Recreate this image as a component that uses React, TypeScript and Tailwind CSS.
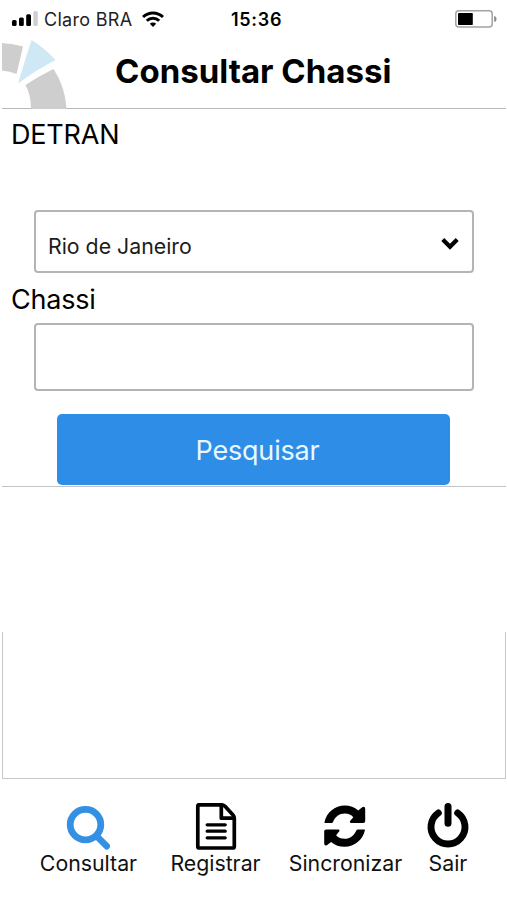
import { useState } from "react";
import type { ReactNode } from "react";

function SignalIcon() {
  return (
    <svg width="27" height="16" viewBox="0 0 27 16" className="shrink-0">
      <rect x="0" y="9" width="4.6" height="6" rx="1.5" />
      <rect x="7" y="6.5" width="4.8" height="8.500" rx="1.5" />
      <rect x="14.2" y="3.2" width="4.8" height="11.8" rx="1.5" />
      <rect x="21.4" y="0" width="4.4" height="15" rx="1.5" fill="#cfcfcf" />
    </svg>
  );
}

function WifiIcon() {
  return (
    <svg width="22" height="16" viewBox="0 0 22 16" fill="none" stroke="#000" strokeWidth="3" className="shrink-0">
      <path d="M1 6a14.2 14.2 0 0 1 20 0" />
      <path d="M4.8 9.8a8.8 8.8 0 0 1 12.4 0" />
      <path d="M11 16l-3.2-3.3a4.6 4.6 0 0 1 6.4 0z" fill="#000" stroke="none" />
    </svg>
  );
}

function BatteryIcon() {
  return (
    <svg width="42" height="18" viewBox="0 0 42 18" className="shrink-0">
      <rect x="0.8" y="0.8" width="36.4" height="16.2" rx="3" fill="#fff" stroke="#a3a3a3" strokeWidth="1.5" />
      <rect x="3" y="3" width="14.8" height="12" rx="0.8" />
      <path d="M39.2 6c1.600.4 2.300 1.400 2.300 3s-.7 2.600-2.300 3z" fill="#8a8a8a" />
    </svg>
  );
}

function Logo() {
  return (
    <svg width="66" height="71" viewBox="0 0 66 71" className="-mb-px shrink-0">
      <path d="M0 5Q11 5.500 21 8.500L14.500 36Q8 33 0 32.500z" fill="#cecece" />
      <path d="M29.500 2Q42 9.500 53.500 22Q34 32 16 45.500Q22 25 29.500 2z" fill="#cfe8f5" />
      <path d="M51.500 31Q63 48 64.600 71H29Q29 57 23.500 47Q37 38 51.500 31z" fill="#cecece" />
    </svg>
  );
}

function SearchIcon() {
  return (
    <svg width="48" height="48" viewBox="0 0 48 48" fill="none" stroke="#3390e3">
      <circle cx="20.500" cy="21.600" r="15.300" strokeWidth="6.800" />
      <path d="M32 33.500L41.700 43.200" strokeWidth="6.600" strokeLinecap="round" />
    </svg>
  );
}

function FileIcon() {
  return (
    <svg width="48" height="48" viewBox="0 0 48 48" fill="none" stroke="#000" strokeWidth="3.700" strokeLinejoin="round">
      <path d="M7 1.800H29.500Q31.500 1.800 33 3.300L41 12Q42.300 13.500 42.300 15.500V43.500Q42.300 45 40.800 45H7.300Q5.800 45 5.800 43.500V3.300Q5.800 1.800 7.300 1.800" />
      <path d="M29.300 2.500V15.200H42" />
      <path d="M15.200 21.800H33.200M15.200 28.200H33.200M15.200 34.800H33.200" strokeWidth="3.300" strokeLinecap="round" />
    </svg>
  );
}

function SyncIcon() {
  return (
    <svg width="48" height="48" viewBox="0 0 48 48">
      <g transform="translate(-1.300 -2)">
        <path
          id="sync-arrow"
          d="M4.300 22Q3.600 22 3.800 21.100C6 11.500 14 4.600 24.200 4.600Q31.800 4.600 37.600 9.500L41.500 6.300Q44.300 4.800 44.500 7.800V20.300Q44.500 22 42.500 22H30.500Q28.400 21.600 29.600 19.800L32.600 16.200Q29.500 12.600 24.200 12.600C18.500 12.600 14.500 16 12.200 21.200Q11.900 22 11 22z"
        />
        <use href="#sync-arrow" transform="rotate(180 24 25.200)" />
      </g>
    </svg>
  );
}

function PowerIcon() {
  return (
    <svg width="48" height="48" viewBox="0 0 48 48" fill="none" stroke="#000" strokeLinecap="round">
      <path d="M14.300 10a17 17 0 1 0 19.400 0" strokeWidth="6.900" />
      <path d="M24 3.500V20.300" strokeWidth="7" />
    </svg>
  );
}

interface TabProps {
  label: string;
  icon: ReactNode;
  className: string;
}

function Tab({ label, icon, className }: TabProps) {
  return (
    <button type="button" className={`flex shrink-0 flex-col items-center ${className}`}>
      {icon}
      <span className="text-[21.3px] leading-6 whitespace-nowrap text-[#111]">{label}</span>
    </button>
  );
}

export default function App() {
  const [chassi, setChassi] = useState("");

  return (
    <div className="flex h-[900px] w-[507px] flex-col overflow-hidden bg-white font-['Inter',sans-serif] text-black">
      <div className="grid h-[38px] shrink-0 grid-cols-[230px_1fr_auto] items-center pr-[10px] pl-3">
        <div className="flex items-center">
          <SignalIcon />
          <span className="ml-[5px] w-[89px] text-[18px] tracking-[0.3px] whitespace-nowrap text-[#222]">Claro BRA</span>
          <span className="ml-[9px]"><WifiIcon /></span>
        </div>
        <span className="-ml-[11px] text-[18px] font-semibold tracking-[0.7px]">15:36</span>
        <BatteryIcon />
      </div>

      <header className="mr-px ml-[2px] flex h-[71px] shrink-0 items-center border-b border-[#b9b9b9]">
        <Logo />
        <h1 className="-mt-[3px] ml-[47px] text-[33px] font-bold whitespace-nowrap">Consultar Chassi</h1>
      </header>

      <form
        className="mr-px ml-[2px] flex h-[378px] shrink-0 flex-col border-b border-[#c4c4c4]"
        onSubmit={(e) => e.preventDefault()}
      >
        <label className="mt-[9px] ml-[9px] text-[27px] leading-[34px] tracking-[-0.2px]">DETRAN</label>
        <button
          type="button"
          className="mt-[58px] mr-8 ml-8 flex h-[63px] shrink-0 items-center justify-between rounded-[4px] border-2 border-[#b4b4b4] pr-[13px] pl-[12px]"
        >
          <span className="pt-[11px] text-[21.3px] text-[#1c1c1c]">Rio de Janeiro</span>
          <svg width="18" height="14" viewBox="0 0 18 14" fill="none" stroke="#000" strokeWidth="4.200" className="mt-1">
            <path d="M1.800 2.600L9 9.800L16.200 2.600" />
          </svg>
        </button>
        <label htmlFor="chassi" className="mt-[10px] ml-[9px] text-[27px] leading-[34px] tracking-[-0.2px]">Chassi</label>
        <input
          id="chassi"
          value={chassi}
          onChange={(e) => setChassi(e.target.value)}
          className="mt-[6px] mr-8 ml-8 h-[68px] shrink-0 rounded-[4px] border-2 border-[#b4b4b4] px-3 text-[21px] outline-none"
        />
        <button
          type="submit"
          className="mt-[23px] mr-[56px] ml-[55px] h-[71px] shrink-0 rounded-[5px] bg-[#2e8ee7] pt-[4px] pl-2 text-[27px] tracking-[-0.2px] text-[#e9f8ff]"
        >
          Pesquisar
        </button>
      </form>

      <section className="mt-[145px] mr-px ml-[2px] h-[147px] shrink-0 border-x border-b border-[#c8c8c8]" />

      <nav className="flex pt-[24px]">
        <Tab label="Consultar" icon={<SearchIcon />} className="ml-[39px] w-[99px]" />
        <Tab label="Registrar" icon={<FileIcon />} className="ml-[31px] w-[93px]" />
        <Tab label="Sincronizar" icon={<SyncIcon />} className="ml-[26px] w-[115px]" />
        <Tab label="Sair" icon={<PowerIcon />} className="ml-[25px] w-[40px]" />
      </nav>
    </div>
  );
}
